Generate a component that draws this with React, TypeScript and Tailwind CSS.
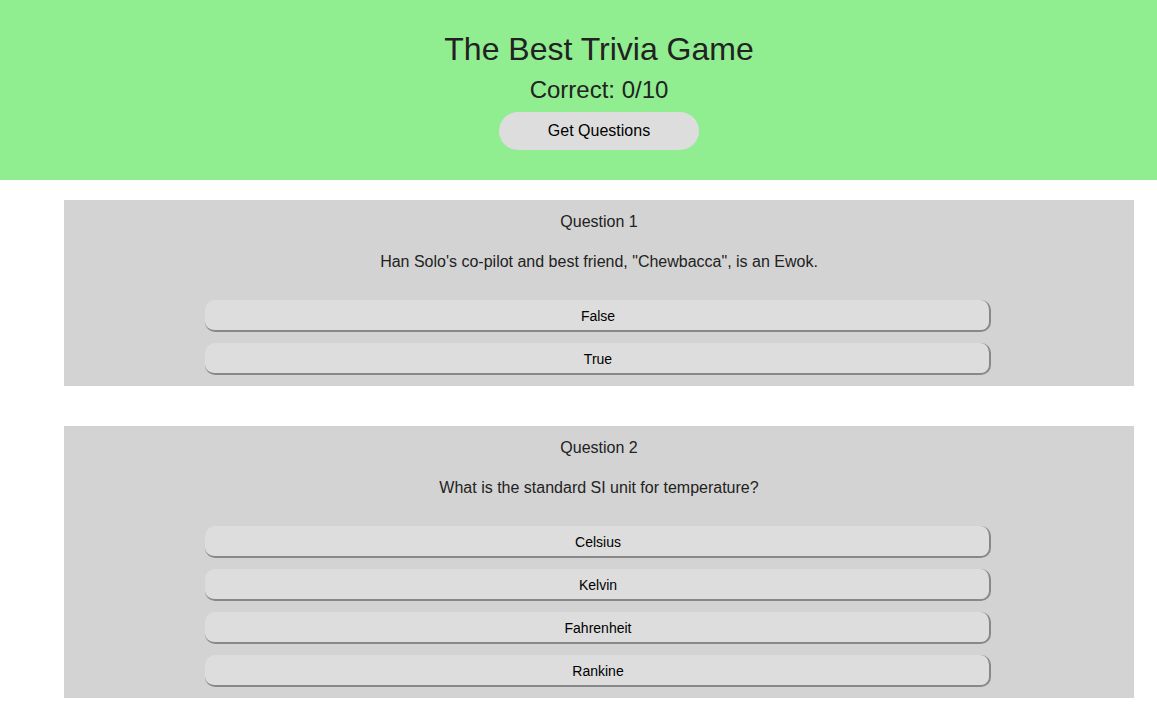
const questions = [
  {
    title: "Question 1",
    text: "Han Solo's co-pilot and best friend, \"Chewbacca\", is an Ewok.",
    answers: ["False", "True"],
  },
  {
    title: "Question 2",
    text: "What is the standard SI unit for temperature?",
    answers: ["Celsius", "Kelvin", "Fahrenheit", "Rankine"],
  },
]

const App = () => {
  return (
    <div className="w-[1157px] h-[721px] overflow-hidden bg-white font-['Liberation_Sans',Arial,sans-serif] text-[#222]">
      <div className="w-[1198px]">
        {/* Header */}
        <div className="h-[180px] bg-[#90ee90] flex flex-col items-center pt-[31px]">
          <h1 className="text-[32px] leading-[37px]">The Best Trivia Game</h1>
          <p className="mt-[8px] text-[24px] leading-[28px]">Correct: 0/10</p>
          <button className="mt-[8px] w-[200px] h-[38px] rounded-full bg-[#dddddd] text-[16px] text-black">
            Get Questions
          </button>
        </div>

        {/* main */}
        <div className="flex flex-col gap-[40px] pt-[20px]">
          {questions.map((q) => (
            <div key={q.title} className="mx-16 bg-[#d3d3d3] flex flex-col items-center pt-[13px] pb-[11px]">
              <p className="text-[16px] leading-[18px]">{q.title}</p>
              <p className="mt-[22px] text-[16px] leading-[18px]">{q.text}</p>
              <div className="mt-[29px] flex flex-col gap-[11px] w-[786px] mr-[2px]">
                {q.answers.map((a) => (
                  <button
                    key={a}
                    className="h-[32px] w-full pl-[2px] pt-[2px] rounded-[10px] bg-[#dddddd] text-[14px] text-black border-r-2 border-b-2 border-[#888888]"
                  >
                    {a}
                  </button>
                ))}
              </div>
            </div>
          ))}
        </div>
      </div>
    </div>
  )
}

export default App
